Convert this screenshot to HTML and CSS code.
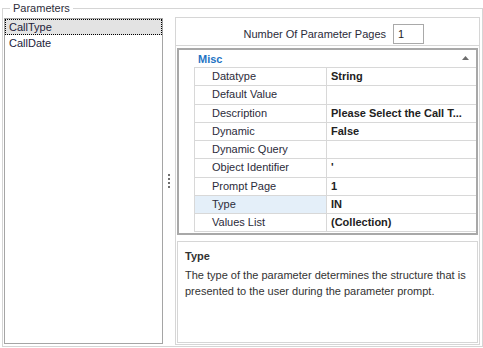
FILE: index.html
```html
<!DOCTYPE html>
<html lang="en">
<head>
    <meta charset="UTF-8">
    <title>Parameters</title>
    <link rel="stylesheet" href="styles.css">
</head>
<body>
    <div class="group">
        <span class="group-title">Parameters</span>

        <ul class="param-list">
            <li class="selected">CallType</li>
            <li>CallDate</li>
        </ul>

        <div class="splitter">
            <span></span><span></span><span></span><span></span>
        </div>

        <div class="editor">
            <div class="pages-bar">
                <label for="pageCount">Number Of Parameter Pages</label>
                <input type="text" id="pageCount" value="1">
            </div>

            <div class="prop-grid">
                <div class="category">
                    <span>Misc</span>
                    <svg class="collapse" width="7" height="4" viewBox="0 0 7 4"><polygon points="0,4 7,4 3.5,0" fill="#6d6d6d"/></svg>
                </div>
                <div class="rows">
                    <div class="row"><div class="name">Datatype</div><div class="value">String</div></div>
                    <div class="row"><div class="name">Default Value</div><div class="value"></div></div>
                    <div class="row"><div class="name">Description</div><div class="value">Please Select the Call T...</div></div>
                    <div class="row"><div class="name">Dynamic</div><div class="value">False</div></div>
                    <div class="row"><div class="name">Dynamic Query</div><div class="value"></div></div>
                    <div class="row"><div class="name">Object Identifier</div><div class="value">'</div></div>
                    <div class="row"><div class="name">Prompt Page</div><div class="value">1</div></div>
                    <div class="row active"><div class="name">Type</div><div class="value">IN</div></div>
                    <div class="row"><div class="name">Values List</div><div class="value">(Collection)</div></div>
                </div>
            </div>

            <div class="description">
                <h4>Type</h4>
                <p>The type of the parameter determines the structure that is presented to the user during the parameter prompt.</p>
            </div>
        </div>
    </div>
</body>
</html>
```

FILE: styles.css
```css
/* Global */
body {
    margin: 0;
    background: #fff;
    font-family: "Liberation Sans", Arial, sans-serif;
    font-size: 11px;
    color: #222;
    overflow: hidden;
}

/* Group box */
.group {
    position: relative;
    box-sizing: border-box;
    width: 481px;
    height: 339px;
    margin: 8px 0 0 2px;
    padding: 8px 2px 1px 1px;
    border: 1px solid #d5d5d5;
    display: flex;
    align-items: flex-start;
}

.group-title {
    position: absolute;
    top: -9px;
    left: 7px;
    padding: 0 3px;
    line-height: 16px;
    background: #fff;
    color: #2e2e3a;
}

/* Parameter list */
.param-list {
    box-sizing: border-box;
    width: 159px;
    height: 326px;
    margin: 1px 0 0 0;
    padding: 0;
    list-style: none;
    border: 1px solid #a5a5a5;
}

.param-list li {
    height: 16px;
    line-height: 16px;
    padding-left: 4px;
    color: #22223a;
}

.param-list li.selected {
    background: #e3e3e3;
    outline: 1px dotted #000;
    outline-offset: -1px;
}

/* Splitter */
.splitter {
    width: 12px;
    height: 328px;
    display: flex;
    flex-direction: column;
    align-items: center;
    justify-content: center;
    gap: 2px;
}

.splitter span {
    width: 2px;
    height: 2px;
    background: #6e6e6e;
}

/* Right side editor */
.editor {
    box-sizing: border-box;
    width: 305px;
    height: 328px;
    border: 1px solid #d6d6d6;
    padding: 0 1px;
    display: flex;
    flex-direction: column;
}

.pages-bar {
    height: 20px;
    padding: 6px 55px 1px 0;
    border-bottom: 1px solid #d6d6d6;
    margin: 0 -1px;
    display: flex;
    justify-content: flex-end;
    align-items: center;
    gap: 7px;
    color: #2b2b3a;
}

.pages-bar input {
    box-sizing: border-box;
    width: 31px;
    height: 20px;
    margin: 0;
    padding: 0 4px;
    border: 1px solid #a9a9a9;
    font: inherit;
    color: #222;
}

/* Property grid */
.prop-grid {
    box-sizing: border-box;
    height: 187px;
    margin-top: 2px;
    border: 2px solid #a8a8a8;
    overflow: hidden;
}

.category {
    height: 17px;
    padding: 0 7px 0 19px;
    display: flex;
    align-items: center;
    justify-content: space-between;
    font-weight: bold;
    color: #1f74c4;
}

.collapse {
    margin-bottom: 2px;
}

.rows {
    margin-left: 15px;
    border-top: 1px solid #d8d8d8;
    border-left: 1px solid #d8d8d8;
}

.row {
    display: grid;
    grid-template-columns: 132px 1fr;
    height: 17.25px;
    border-bottom: 1px solid #d8d8d8;
}

.name {
    padding-left: 17px;
    line-height: 17px;
    border-right: 1px solid #d8d8d8;
    color: #2b2b3a;
}

.value {
    padding-left: 4px;
    line-height: 17px;
    font-weight: bold;
    white-space: nowrap;
    overflow: hidden;
    color: #222;
}

.row.active .name {
    background: #e4eff9;
}

/* Description */
.description {
    box-sizing: border-box;
    height: 102px;
    margin-top: 6px;
    border: 1px solid #d6d6d6;
    padding: 7px 7px;
    color: #333;
}

.description h4 {
    margin: 0 0 4px;
    font-size: 11px;
    line-height: 14px;
}

.description p {
    margin: 0;
    line-height: 16px;
}
```
